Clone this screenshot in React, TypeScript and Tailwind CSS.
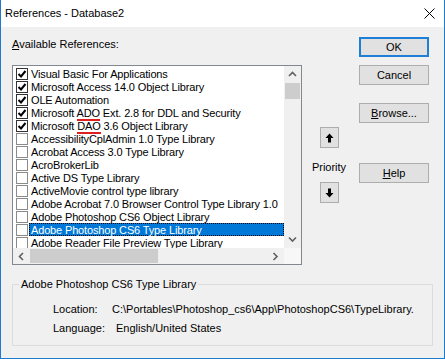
import React from 'react';

type Ref = { name: React.ReactNode; checked?: boolean; selected?: boolean };

const Mark = ({ children }: { children: React.ReactNode }) => (
    <span className="border-b-2 border-[#e0201c]">{children}</span>
);

const refs: Ref[] = [
    { name: 'Visual Basic For Applications', checked: true },
    { name: 'Microsoft Access 14.0 Object Library', checked: true },
    { name: 'OLE Automation', checked: true },
    { name: <>Microsoft <Mark>ADO</Mark> Ext. 2.8 for DDL and Security</>, checked: true },
    { name: <>Microsoft <Mark>DAO</Mark> 3.6 Object Library</>, checked: true },
    { name: 'AccessibilityCplAdmin 1.0 Type Library' },
    { name: 'Acrobat Access 3.0 Type Library' },
    { name: 'AcroBrokerLib' },
    { name: 'Active DS Type Library' },
    { name: 'ActiveMovie control type library' },
    { name: 'Adobe Acrobat 7.0 Browser Control Type Library 1.0' },
    { name: 'Adobe Photoshop CS6 Object Library' },
    { name: 'Adobe Photoshop CS6 Type Library', selected: true },
    { name: 'Adobe Reader File Preview Type Library' },
];

const Chevron = ({ dir }: { dir: 'up' | 'down' | 'left' | 'right' }) => {
    const d = {
        up: 'M1 5 L4.5 1.5 L8 5',
        down: 'M1 1.5 L4.5 5 L8 1.5',
        left: 'M5 1 L1.5 4.5 L5 8',
        right: 'M1.5 1 L5 4.5 L1.5 8',
    }[dir];
    const vertical = dir === 'up' || dir === 'down';
    return (
        <svg width={vertical ? 9 : 7} height={vertical ? 7 : 9} viewBox={vertical ? '0 0 9 7' : '0 0 7 9'}>
            <path d={d} fill="none" stroke="#606060" strokeWidth="1.6" />
        </svg>
    );
};

const Check = () => (
    <svg width="10" height="10" viewBox="0 0 10 10">
        <path d="M1.5 5 L4 7.5 L8.5 2" fill="none" stroke="#000" strokeWidth="2" />
    </svg>
);

const Arrow = ({ down }: { down?: boolean }) => (
    <svg width="9" height="10" viewBox="0 0 9 10" className={down ? 'rotate-180' : ''}>
        <path d="M4.5 0.5 L8.5 5 L6 5 L6 9.5 L3 9.5 L3 5 L0.5 5 Z" fill="#000" />
    </svg>
);

const Button = ({ children, primary }: { children: React.ReactNode; primary?: boolean }) => (
    <div
        className={
            'h-[20px] w-[70px] flex items-center justify-center bg-[#e1e1e1] text-[11px] ' +
            (primary ? 'border-2 border-[#1e7fd6]' : 'border border-[#adadad]')
        }
    >
        {children}
    </div>
);

const App = () => {
    return (
        <div
            className="w-[445px] h-[359px] flex flex-col border-x border-b border-[#1c7ad0] bg-[#f0f0f0] text-black"
            style={{ fontFamily: '"Liberation Sans", Arial, sans-serif' }}
        >
            <div className="h-[27px] shrink-0 bg-white flex items-center justify-between pl-[4px] pr-[9px]">
                <span className="text-[11px]">References - Database2</span>
                <svg width="11" height="11" viewBox="0 0 11 11">
                    <path d="M0.5 0.5 L10.5 10.5 M10.5 0.5 L0.5 10.5" stroke="#000" strokeWidth="1" />
                </svg>
            </div>

            <div className="flex-1 flex flex-col pt-[10px] pl-[11px]">
                <div className="flex">
                    {/* list */}
                    <div className="w-[290px] flex flex-col">
                        <div className="h-[28px] text-[11px] leading-[15px]">
                            <span className="underline">A</span>vailable References:
                        </div>
                        <div className="h-[200px] border border-[#828790] bg-white flex flex-col">
                            <div className="flex h-[182px]">
                                <div className="flex-1 overflow-hidden pt-[1px]">
                                    {refs.map((r, i) => (
                                        <div key={i} className="h-[13px] flex items-center pl-[3px] text-[11px] tracking-[-0.15px] whitespace-nowrap">
                                            <div
                                                className={
                                                    'w-[12px] h-[12px] shrink-0 bg-white border flex items-center justify-center ' +
                                                    (r.checked ? 'border-[#333]' : 'border-[#8a8a8a]')
                                                }
                                            >
                                                {r.checked && <Check />}
                                            </div>
                                            <span
                                                className={
                                                    'ml-[1px] h-[13px] leading-[12px] px-[1px] ' +
                                                    (r.selected
                                                        ? 'flex-1 bg-[#0078d7] text-white border border-dotted border-black'
                                                        : 'border border-transparent')
                                                }
                                            >
                                                {r.name}
                                            </span>
                                        </div>
                                    ))}
                                </div>
                                <div className="w-[17px] shrink-0 bg-[#f0f0f0] flex flex-col">
                                    <div className="h-[17px] flex items-center justify-center">
                                        <Chevron dir="up" />
                                    </div>
                                    <div className="h-[16px] mx-[1px] bg-[#cdcdcd]" />
                                    <div className="flex-1" />
                                    <div className="h-[17px] flex items-center justify-center">
                                        <Chevron dir="down" />
                                    </div>
                                </div>
                            </div>
                            <div className="flex-1 flex">
                                <div className="flex-1 flex bg-[#f0f0f0]">
                                    <div className="w-[17px] flex items-center justify-center">
                                        <Chevron dir="left" />
                                    </div>
                                    <div className="w-[128px] my-[1px] bg-[#cdcdcd]" />
                                    <div className="flex-1" />
                                    <div className="w-[17px] flex items-center justify-center">
                                        <Chevron dir="right" />
                                    </div>
                                </div>
                                <div className="w-[17px] bg-[#f7f7f7]" />
                            </div>
                        </div>
                    </div>

                    {/* priority */}
                    <div className="ml-[12px] w-[30px] flex flex-col items-center pt-[90px]">
                        <div className="w-[19px] h-[21px] bg-[#e1e1e1] border border-[#adadad] flex items-center justify-center">
                            <Arrow />
                        </div>
                        <div className="mt-[12px] h-[14px] leading-[14px] text-[11px]">Priority</div>
                        <div className="mt-[8px] w-[19px] h-[21px] bg-[#e1e1e1] border border-[#adadad] flex items-center justify-center">
                            <Arrow down />
                        </div>
                    </div>

                    {/* buttons */}
                    <div className="ml-[15px] flex flex-col">
                        <Button primary>OK</Button>
                        <div className="mt-[8px]">
                            <Button>Cancel</Button>
                        </div>
                        <div className="mt-[18px]">
                            <Button>
                                <span className="underline">B</span>rowse...
                            </Button>
                        </div>
                        <div className="mt-[40px]">
                            <Button>
                                <span className="underline">H</span>elp
                            </Button>
                        </div>
                    </div>
                </div>

                <fieldset className="mt-[12px] w-[421px] h-[69px] border border-[#dcdcdc] px-[6px] text-[11px]">
                    <legend className="px-[2px] leading-[14px]">Adobe Photoshop CS6 Type Library</legend>
                    <div className="pl-[34px] pt-[9px] flex flex-col">
                        <div className="h-[19px] flex items-center">
                            <span className="w-[59px]">Location:</span>
                            <span>C:\Portables\Photoshop_cs6\App\PhotoshopCS6\TypeLibrary.</span>
                        </div>
                        <div className="h-[19px] flex items-center">
                            <span className="w-[63px]">Language:</span>
                            <span>English/United States</span>
                        </div>
                    </div>
                </fieldset>
            </div>
        </div>
    );
};

export default App;
